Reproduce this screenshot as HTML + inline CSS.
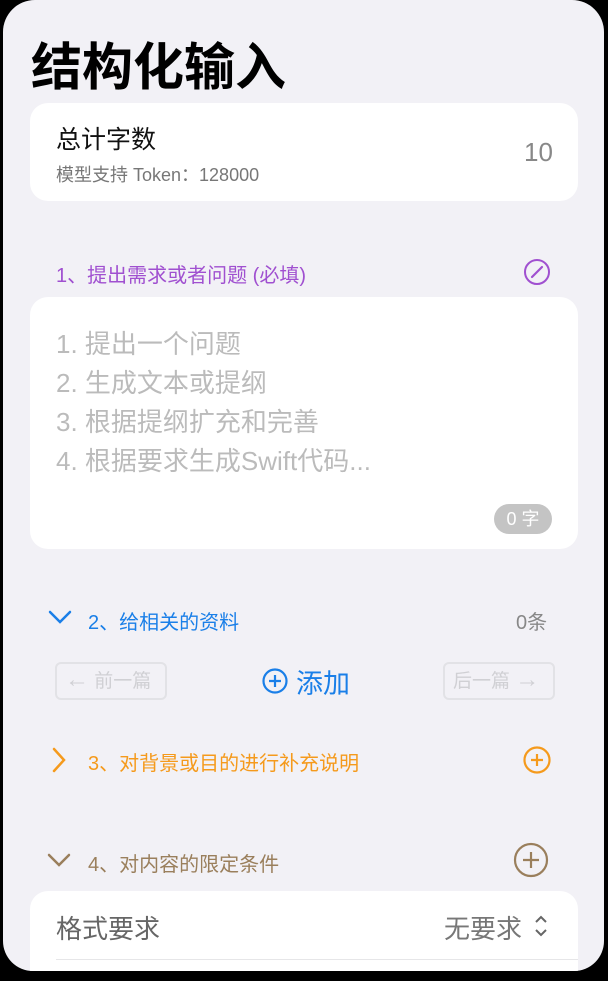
<!DOCTYPE html>
<html><head><meta charset="utf-8"><style>
body{margin:0;width:608px;height:981px;background:#000;overflow:hidden;font-family:"Liberation Sans","Noto Sans CJK SC",sans-serif;}
.scr{position:absolute;left:3px;top:0;width:601px;height:971px;background:#f2f1f6;border-radius:32px 32px 30px 30px;overflow:hidden;}
.a{position:absolute;white-space:nowrap;}
.card{position:absolute;background:#fff;border-radius:18px;}
</style></head><body>
<div class="scr">
<div class="a" style="left:28px;top:26px;font-size:51px;font-weight:bold;color:#000;">结构化输入</div>
<div class="card" style="left:27px;top:103px;width:548px;height:98px;"></div>
<div class="a" style="left:53px;top:120px;font-size:25px;color:#111;">总计字数</div>
<div class="a" style="left:53px;top:161px;font-size:18px;color:#777;">模型支持 Token：128000</div>
<div class="a" style="left:521px;top:137px;font-size:26px;color:#888;">10</div>

<div class="a" style="left:53px;top:259px;font-size:20px;color:#a050d0;">1、提出需求或者问题 (必填)</div>
<svg class="a" style="left:520px;top:258px" width="28" height="28" viewBox="0 0 28 28"><circle cx="14" cy="14" r="12" fill="none" stroke="#a050d0" stroke-width="2"/><path d="M9 19 L19 9" stroke="#a050d0" stroke-width="2.2" stroke-linecap="round"/></svg>

<div class="card" style="left:27px;top:297px;width:548px;height:252px;"></div>
<div class="a" style="left:53px;top:325px;font-size:26px;line-height:39px;color:#bbb;">1. 提出一个问题<br>2. 生成文本或提纲<br>3. 根据提纲扩充和完善<br>4. 根据要求生成Swift代码...</div>
<div class="a" style="left:491px;top:504px;width:58px;height:30px;border-radius:15px;background:#c4c4c4;color:#fff;font-size:18px;line-height:30px;text-align:center;">0 字</div>

<svg class="a" style="left:45px;top:609px" width="26" height="18" viewBox="0 0 26 18"><path d="M2 3 L12 13 L22 3" fill="none" stroke="#1a7fe8" stroke-width="2.5" stroke-linecap="round"/></svg>
<div class="a" style="left:85px;top:606px;font-size:20px;color:#1a7fe8;">2、给相关的资料</div>
<div class="a" style="left:513px;top:606px;font-size:20px;color:#888;">0条</div>

<div class="a" style="left:52px;top:662px;width:108px;height:34px;border:2px solid #e2e2e6;border-radius:6px;"></div>
<div class="a" style="left:62px;top:666px;font-size:19px;color:#d0d0d4;"><span style="font-size:24px;">←</span>&nbsp;前一篇</div>
<svg class="a" style="left:258px;top:667px" width="28" height="28" viewBox="0 0 28 28"><circle cx="14" cy="14" r="11.5" fill="none" stroke="#1a7fe8" stroke-width="2.2"/><path d="M14 8v12M8 14h12" stroke="#1a7fe8" stroke-width="2.2"/></svg>
<div class="a" style="left:293px;top:662px;font-size:27px;color:#1a7fe8;">添加</div>
<div class="a" style="left:440px;top:662px;width:108px;height:34px;border:2px solid #e2e2e6;border-radius:6px;"></div>
<div class="a" style="left:450px;top:666px;font-size:19px;color:#d0d0d4;">后一篇&nbsp;<span style="font-size:24px;">→</span></div>

<svg class="a" style="left:46px;top:746px" width="20" height="28" viewBox="0 0 20 28"><path d="M5 3 L15 14 L5 25" fill="none" stroke="#f59a1c" stroke-width="2.5" stroke-linecap="round"/></svg>
<div class="a" style="left:85px;top:747px;font-size:20px;color:#f59a1c;">3、对背景或目的进行补充说明</div>
<svg class="a" style="left:519px;top:745px" width="30" height="30" viewBox="0 0 30 30"><circle cx="15" cy="15" r="12.5" fill="none" stroke="#f59a1c" stroke-width="2.2"/><path d="M15 9v12M9 15h12" stroke="#f59a1c" stroke-width="2.2"/></svg>

<svg class="a" style="left:44px;top:852px" width="26" height="18" viewBox="0 0 26 18"><path d="M2 3 L12 13 L22 3" fill="none" stroke="#9a7f5c" stroke-width="2.5" stroke-linecap="round"/></svg>
<div class="a" style="left:85px;top:848px;font-size:20px;color:#9a7f5c;">4、对内容的限定条件</div>
<svg class="a" style="left:510px;top:842px" width="36" height="36" viewBox="0 0 36 36"><circle cx="18" cy="18" r="16" fill="none" stroke="#9a7f5c" stroke-width="2.2"/><path d="M18 10v16M10 18h16" stroke="#9a7f5c" stroke-width="2.2"/></svg>

<div class="card" style="left:27px;top:891px;width:548px;height:120px;"></div>
<div class="a" style="left:53px;top:909px;font-size:26px;color:#666;">格式要求</div>
<div class="a" style="left:441px;top:909px;font-size:26px;color:#777;">无要求</div>
<svg class="a" style="left:531px;top:914px" width="14" height="24" viewBox="0 0 14 24"><path d="M2 8 L7 3 L12 8 M2 16 L7 21 L12 16" fill="none" stroke="#666" stroke-width="2"/></svg>
<div class="a" style="left:53px;top:959px;width:522px;height:1px;background:#e6e6e8;"></div>
</div>
</body></html>
